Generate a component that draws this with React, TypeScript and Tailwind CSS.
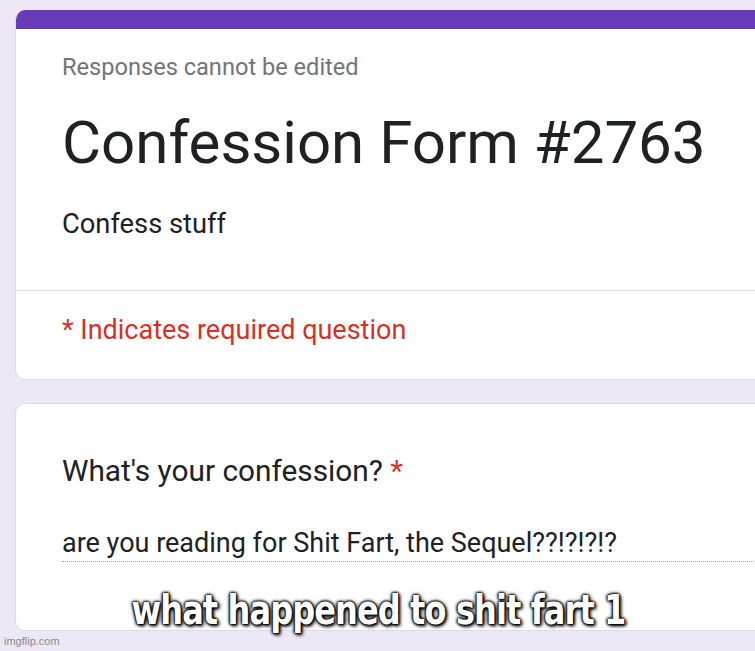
import React from "react";

const App: React.FC = () => {
  return (
    <div className="relative w-[755px] h-[651px] overflow-hidden bg-[#ede7f6] font-['Roboto',sans-serif]">
      <div className="pl-[15px] pt-[10px] flex flex-col gap-[23px]">
        {/* header card */}
        <div className="w-[760px] rounded-l-[10px] bg-white border border-[#dadce0] border-t-0 overflow-hidden">
          <div className="h-[19px] bg-[#673ab7]" />
          <div className="pl-[46px] pt-[23px] pb-[48px]">
            <div className="text-[23.6px] leading-[30px] text-[#70757a]">Responses cannot be edited</div>
            <div className="mt-[25px] text-[60px] leading-[72px] text-[#202124]">Confession Form #2763</div>
            <div className="mt-[27px] text-[27.3px] leading-[36px] text-[#202124]">Confess stuff</div>
          </div>
          <div className="border-t border-[#dadce0] pl-[46px] pt-[21px] pb-[31px]">
            <div className="text-[27px] leading-[36px] text-[#d93025]">* Indicates required question</div>
          </div>
        </div>

        {/* question card */}
        <div className="w-[760px] h-[228px] rounded-l-[10px] bg-white border border-[#dadce0] pl-[46px] pt-[47px]">
          <div className="text-[29.8px] leading-[40px] text-[#202124]">
            What's your confession? <span className="text-[#d93025]">*</span>
          </div>
          <div className="mt-[34px] text-[27px] leading-[36px] text-[#202124] border-b border-dotted border-[#9aa0a6]">
            are you reading for Shit Fart, the Sequel??!?!?!?
          </div>
        </div>
      </div>

      {/* meme caption */}
      <div className="absolute left-0 right-0 top-[586px] flex justify-center">
        <div className="ml-[2px] scale-x-[0.89] origin-center text-white text-[40px] leading-[48px] font-bold tracking-[-1px] whitespace-nowrap font-['DejaVu_Sans_Condensed','Liberation_Sans',sans-serif] [text-shadow:0_0_2px_#000,0_0_2px_#000,0_0_3px_#000,0_0_5px_#000,2px_2px_4px_#000]">
          what happened to shit fart 1
        </div>
      </div>
      <div className="absolute left-[4px] bottom-[2px] text-[11px] text-[#8a8a8a] font-['Liberation_Sans',sans-serif]">
        imgflip.com
      </div>
    </div>
  );
};

export default App;
